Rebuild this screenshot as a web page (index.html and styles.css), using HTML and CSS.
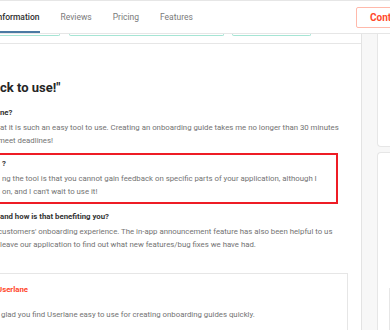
FILE: index.html
```html
<!DOCTYPE html>
<html lang="en">
<head>
    <meta charset="UTF-8">
    <meta name="viewport" content="width=device-width, initial-scale=1.0">
    <title>Userlane Reviews</title>
    <link rel="stylesheet" href="styles.css">
</head>
<body>
<header class="topbar">
    <nav class="tabs">
        <a class="tab active" href="#info">Information</a>
        <a class="tab" href="#reviews">Reviews</a>
        <a class="tab" href="#pricing">Pricing</a>
        <a class="tab" href="#features">Features</a>
    </nav>
    <a class="contact" href="#contact">Contact Userlane</a>
</header>
<div class="page">
    <main class="main_card">
        <div class="sections">
            <span class="sec sec1"></span>
            <span class="sec sec2"></span>
            <span class="sec sec3"></span>
        </div>
        <div class="review">
            <h2 class="title">ck to use!"</h2>
            <div class="qa">
                <div class="question">ne?</div>
                <p class="answer">at it is such an easy tool to use. Creating an onboarding guide takes me no longer than 30 minutes<br><span class="ind">meet deadlines!</span></p>
            </div>
            <div class="qa highlight">
                <div class="question">?</div>
                <p class="answer">ng the tool is that you cannot gain feedback on specific parts of your application, although I<br>on, and I can't wait to use it!</p>
            </div>
            <div class="qa">
                <div class="question">and how is that benefiting you?</div>
                <p class="answer"><span class="ind">customers' onboarding experience. The in-app announcement feature has also been helpful to us</span><br>leave our application to find out what new features/bug fixes we have had.</p>
            </div>
            <div class="response">
                <div class="response_from">Userlane</div>
                <p class="answer">glad you find Userlane easy to use for creating onboarding guides quickly.</p>
            </div>
        </div>
    </main>
    <aside class="side">
        <div class="side_card first"></div>
        <div class="side_card second">
            <div class="side_inner"></div>
        </div>
    </aside>
</div>
</body>
</html>
```

FILE: styles.css
```css
* {
    box-sizing: border-box;
    margin: 0;
    padding: 0;
}
body {
    width: 390px;
    height: 330px;
    overflow: hidden;
    background: #fff;
    font-family: 'Roboto', 'Liberation Sans', sans-serif;
}
.topbar {
    display: flex;
    align-items: stretch;
    height: 34px;
    border-top: 1px solid #e6e6e6;
    border-bottom: 1px solid #e6e6e6;
    background: #fff;
}
.tabs {
    display: flex;
    gap: 21px;
    margin-left: -5px;
}
.tab {
    display: flex;
    align-items: center;
    padding-top: 2px;
    border-bottom: 2px solid transparent;
    font-size: 8.5px;
    color: #7a7a7a;
    text-decoration: none;
}
.tab.active {
    color: #2f2f2f;
    font-weight: 500;
    border-bottom-color: #4b7aa3;
}
.contact {
    margin: 6px -76px 5px auto;
    width: 110px;
    padding-left: 13px;
    display: flex;
    align-items: center;
    border: 1px solid #ffb9ab;
    border-radius: 2px;
    color: #ff492c;
    font-size: 10px;
    font-weight: 700;
    text-decoration: none;
    white-space: nowrap;
}
.page {
    display: flex;
    height: 296px;
    background: #f7f7f7;
}
.main_card {
    width: 362px;
    flex-shrink: 0;
    background: #fff;
    border-right: 1px solid #e3e3e3;
}
.sections {
    display: flex;
    gap: 8px;
    height: 10px;
    border-bottom: 1px solid #e6e6e6;
}
.sec {
    height: 2px;
    border: 1px solid #a6e5d4;
    border-top: 0;
    border-radius: 0 0 3px 3px;
}
.sec1 {
    width: 70px;
    margin-left: -10px;
    margin-right: 1px;
}
.sec2 {
    width: 155px;
}
.sec3 {
    width: 79px;
}
.review {
    padding-top: 36px;
    color: #737373;
    font-size: 7.8px;
    line-height: 12.5px;
}
.title {
    font-size: 13px;
    line-height: 16px;
    font-weight: 700;
    color: #252525;
    margin-bottom: 10px;
}
.qa {
    margin-bottom: 6px;
}
.question {
    font-weight: 700;
    color: #333;
    line-height: 13px;
    margin-bottom: 3px;
}
.answer {
    white-space: nowrap;
}
.ind {
    margin-left: -2px;
}
.highlight {
    width: 358px;
    margin-left: -20px;
    padding: 2px 0 4px 20px;
    border: 2px solid #ee1c25;
}
.response {
    margin-top: 22px;
    width: 368px;
    margin-left: -20px;
    padding: 9px 0 40px 20px;
    border: 1px solid #e6e6e6;
}
.response_from {
    margin-left: -4px;
    font-weight: 700;
    color: #ff492c;
    line-height: 13px;
    margin-bottom: 13px;
}
.side {
    flex: 1;
    margin-left: 15px;
}
.side_card {
    background: #fff;
    border: 1px solid #e6e6e6;
    border-right: 0;
}
.side_card.first {
    height: 113px;
    border-top: 0;
    border-radius: 0 0 0 4px;
}
.side_card.second {
    height: 200px;
    margin-top: 5px;
    border-radius: 4px 0 0 0;
    padding: 135px 0 0 11px;
}
.side_inner {
    height: 60px;
    border: 1px solid #e6e6e6;
    border-right: 0;
    border-radius: 3px 0 0 0;
}
```
